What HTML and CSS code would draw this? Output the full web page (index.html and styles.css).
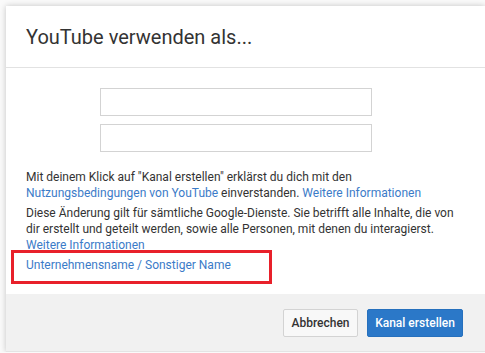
FILE: index.html
```html
<!DOCTYPE html>
<html lang="de">
<head>
<meta charset="utf-8">
<title>YouTube verwenden als...</title>
<link rel="stylesheet" href="styles.css">
</head>
<body>
<div class="dialog">
  <div class="dialog-header">
    <h1 class="dialog-title">YouTube verwenden als...</h1>
  </div>
  <div class="dialog-body">
    <div class="inputs">
      <input class="field" type="text">
      <input class="field" type="text">
    </div>
    <p class="note">Mit deinem Klick auf "Kanal erstellen" erklärst du dich mit den <a class="link" href="#">Nutzungsbedingungen von YouTube</a> einverstanden. <a class="link" href="#">Weitere Informationen</a></p>
    <p class="note">Diese Änderung gilt für sämtliche Google-Dienste. Sie betrifft alle Inhalte, die von dir erstellt und geteilt werden, sowie alle Personen, mit denen du interagierst. <a class="link" href="#">Weitere Informationen</a></p>
    <div class="alt-name">
      <a class="link" href="#">Unternehmensname / Sonstiger Name</a>
      <span class="highlight"></span>
    </div>
  </div>
  <div class="dialog-footer">
    <button class="btn btn-default">Abbrechen</button>
    <button class="btn btn-primary">Kanal erstellen</button>
  </div>
</div>
</body>
</html>
```
FILE: styles.css
```css
html, body {
  margin: 0;
  padding: 0;
}
body {
  background: #fafafa;
  padding: 6px 0 0 6px;
  font-family: Roboto, "Liberation Sans", Arial, sans-serif;
  overflow: hidden;
}
.dialog {
  width: 479px;
  background: #fff;
  box-shadow: 0 0 6px rgba(0, 0, 0, 0.22);
}
.dialog-header {
  height: 61px;
  display: flex;
  align-items: center;
  padding-left: 20px;
  border-bottom: 1px solid #e2e2e2;
}
.dialog-title {
  margin: 0;
  font-size: 20px;
  font-weight: 400;
  color: #333;
}
.dialog-body {
  padding: 20px 20px 21px 20px;
  position: relative;
}
.inputs {
  display: flex;
  flex-direction: column;
  gap: 8px;
  padding-left: 74px;
}
.field {
  box-sizing: border-box;
  width: 272px;
  height: 28px;
  margin: 0;
  border: 1px solid #d3d3d3;
  background: #fff;
  outline: none;
}
.note {
  margin: 4px 0 0 0;
  font-size: 12px;
  line-height: 16px;
  color: #333;
}
.inputs + .note {
  margin-top: 17px;
}
.link {
  color: #3b7bc8;
  text-decoration: none;
}
.alt-name {
  position: relative;
  margin-top: 4px;
  font-size: 12px;
  line-height: 16px;
}
.highlight {
  position: absolute;
  left: -15px;
  top: -7px;
  width: 255px;
  height: 28px;
  border: 3px solid #e8202a;
}
.dialog-footer {
  height: 58px;
  box-sizing: border-box;
  background: #f1f1f1;
  display: flex;
  justify-content: flex-end;
  align-items: flex-start;
  gap: 9px;
  padding: 15px 22px 0 0;
  border-bottom: 1px solid #e4e4e4;
}
.btn {
  height: 28px;
  box-sizing: border-box;
  font-family: Roboto, "Liberation Sans", Arial, sans-serif;
  font-size: 12px;
  font-weight: 500;
  border-radius: 2px;
  padding: 0;
  white-space: nowrap;
  cursor: pointer;
}
.btn-default {
  width: 75px;
  background: #f8f8f8;
  border: 1px solid #d3d3d3;
  color: #333;
}
.btn-primary {
  width: 96px;
  background: #2b78c8;
  border: 1px solid #2670bd;
  color: #fff;
}
```
